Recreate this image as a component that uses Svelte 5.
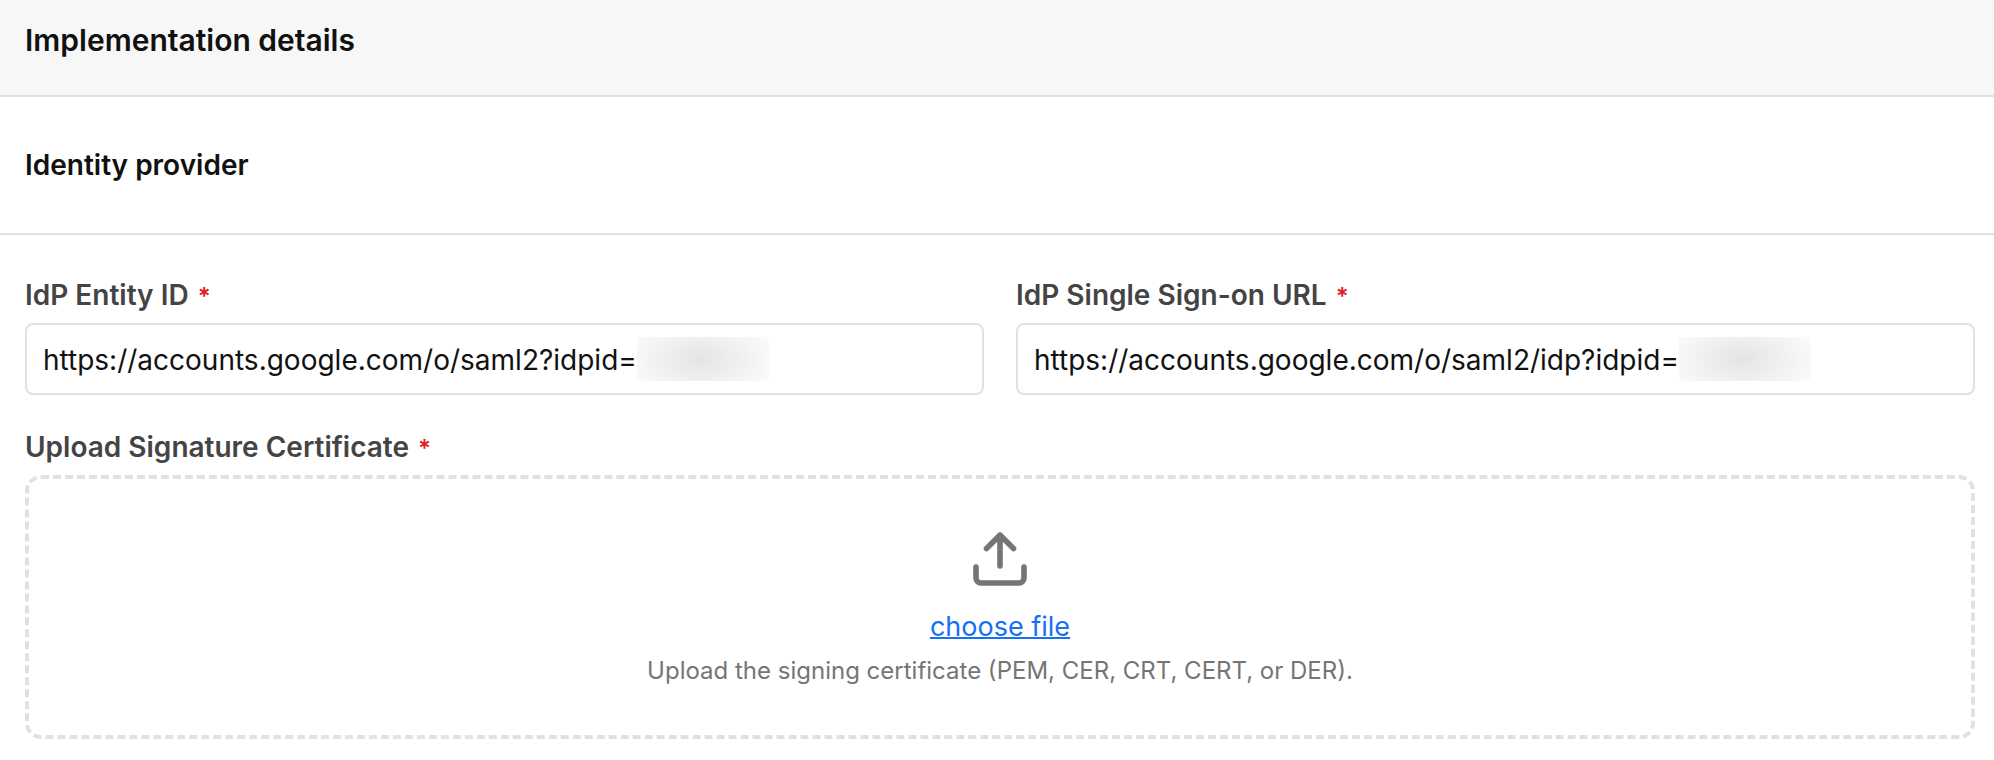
<script>
  let entityId = 'https://accounts.google.com/o/saml2?idpid=';
  let signOnUrl = 'https://accounts.google.com/o/saml2/idp?idpid=';
  let fileInput;

  function chooseFile() {
    fileInput.click();
  }
</script>

<header>
  <h1>Implementation details</h1>
</header>

<section class="subheader">
  <h2>Identity provider</h2>
</section>

<form>
  <div class="row">
    <div class="field">
      <label for="entity-id">IdP Entity ID <span class="required">*</span></label>
      <div class="text-box">
        <input id="entity-id" type="text" spellcheck="false" required bind:value={entityId} />
        <span class="redacted"></span>
      </div>
    </div>
    <div class="field">
      <label for="sign-on-url">IdP Single Sign-on URL <span class="required">*</span></label>
      <div class="text-box">
        <input id="sign-on-url" type="text" spellcheck="false" required bind:value={signOnUrl} />
        <span class="redacted"></span>
      </div>
    </div>
  </div>

  <div class="field">
    <label for="certificate">Upload Signature Certificate <span class="required">*</span></label>
    <div class="dropzone">
      <input
        id="certificate"
        type="file"
        accept=".pem,.cer,.crt,.cert,.der"
        hidden
        bind:this={fileInput}
      />
      <svg viewBox="0 0 64 64" aria-hidden="true">
        <path d="M32 39V8M18.5 21.5 32 8l13.5 13.5" />
        <path d="M8 40v11a5 5 0 0 0 5 5h38a5 5 0 0 0 5-5V40" />
      </svg>
      <button type="button" on:click={chooseFile}>choose file</button>
      <p>Upload the signing certificate (PEM, CER, CRT, CERT, or DER).</p>
    </div>
  </div>
</form>

<style>
  :global(body) {
    margin: 0;
    background: #fff;
    color: #111;
    font-family: Inter, "Liberation Sans", sans-serif;
    font-size: 28px;
    line-height: 40px;
  }

  h1,
  h2,
  p {
    margin: 0;
  }

  header {
    padding: 20px 25px 35px;
    background: #f7f7f7;
    border-bottom: 2px solid #e1e1e1;
  }

  h1 {
    font-size: 30px;
    font-weight: 600;
  }

  .subheader {
    padding: 48px 25px;
    border-bottom: 2px solid #e1e1e1;
  }

  h2 {
    font-size: 28px;
    font-weight: 600;
  }

  form {
    display: flex;
    flex-direction: column;
    gap: 32px;
    padding: 40px 19px 20px 25px;
  }

  .row {
    display: flex;
    gap: 32px;
  }

  .field {
    display: flex;
    flex: 1;
    flex-direction: column;
    gap: 8px;
    min-width: 0;
  }

  label {
    color: #444;
    font-weight: 600;
  }

  .required {
    margin-left: 2px;
    color: #e32021;
    font-size: 24px;
    line-height: 24px;
  }

  .text-box {
    display: flex;
    align-items: center;
    height: 68px;
    padding: 0 16px;
    border: 2px solid #e1e1e1;
    border-radius: 8px;
    overflow: hidden;
  }

  .text-box input {
    field-sizing: content;
    min-width: 0;
    padding: 2px 0 0;
    border: none;
    outline: none;
    background: transparent;
    color: #111;
    font: inherit;
  }

  .redacted {
    flex: none;
    width: 132px;
    height: 44px;
    background: radial-gradient(ellipse 80px 44px at 48% 50%, #e4e4e4, #f0f0f0 50%, #fcfcfc);
  }

  .dropzone {
    display: flex;
    flex-direction: column;
    align-items: center;
    padding: 48px 20px;
    border: 4px dashed #e1e1e1;
    border-radius: 16px;
  }

  svg {
    width: 64px;
    height: 64px;
    fill: none;
    stroke: #757575;
    stroke-width: 5.6;
    stroke-linecap: round;
    stroke-linejoin: round;
  }

  button {
    margin-top: 16px;
    padding: 0;
    border: none;
    background: none;
    color: #176ff2;
    font: inherit;
    font-size: 27px;
    text-decoration: underline;
    text-decoration-thickness: 2px;
    cursor: pointer;
  }

  p {
    margin-top: 8px;
    color: #757575;
    font-size: 24px;
    line-height: 32px;
  }
</style>
